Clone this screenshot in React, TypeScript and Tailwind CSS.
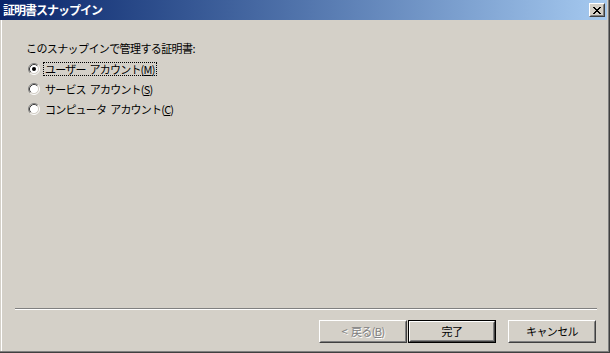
import type { ReactNode } from "react"

const font = "font-['Noto_Sans_CJK_JP','Noto_Sans_CJK_SC',sans-serif]"

function Radio({ checked }: { checked?: boolean }) {
  return (
    <svg width="12" height="12" viewBox="0 0 12 12" className="shrink-0">
      <circle cx="6" cy="6" r="4.5" fill="#ffffff" />
      <path d="M2.11 9.89 A5.5 5.5 0 0 1 9.89 2.11" fill="none" stroke="#808080" />
      <path d="M9.89 2.11 A5.5 5.5 0 0 1 2.11 9.89" fill="none" stroke="#ffffff" />
      <path d="M2.82 9.18 A4.5 4.5 0 0 1 9.18 2.82" fill="none" stroke="#404040" />
      <path d="M9.18 2.82 A4.5 4.5 0 0 1 2.82 9.18" fill="none" stroke="#D4D0C8" />
      {checked && <circle cx="6" cy="6" r="2" fill="#000000" />}
    </svg>
  )
}

function Option({ first, rest, keyChar, checked }: { first: string; rest: string; keyChar: string; checked?: boolean }) {
  return (
    <div className="flex items-center gap-[3px] h-[14px]">
      <Radio checked={checked} />
      <span
        className={`px-px leading-[12px] tracking-[-0.8px] border border-dotted ${
          checked ? "border-black" : "border-transparent"
        }`}
      >
        {first}
        <span className="inline-block w-[4px]" />
        {rest}(<span className="underline">{keyChar}</span>)
      </span>
    </div>
  )
}

function Btn({ children, def, disabled }: { children: ReactNode; def?: boolean; disabled?: boolean }) {
  return (
    <div className={`w-[88px] h-[23px] flex ${def ? "border border-black" : ""}`}>
      <div className="flex-1 flex border border-t-white border-l-white border-r-[#404040] border-b-[#404040]">
        <div
          className={`flex-1 flex items-center justify-center border border-t-[#D4D0C8] border-l-[#D4D0C8] border-r-[#808080] border-b-[#808080] text-[11px] tracking-[-0.6px] ${
            disabled ? "text-[#808080] [text-shadow:1px_1px_0_#ffffff]" : "text-black"
          }`}
        >
          {children}
        </div>
      </div>
    </div>
  )
}

export default function App() {
  return (
    <div className={`w-[610px] h-[353px] bg-[#D4D0C8] border-r border-b border-[#404040] ${font}`}>
      <div className="h-full flex flex-col border-r border-b border-[#808080]">
        {/* title bar */}
        <div className="h-[20px] mr-px shrink-0 flex items-center justify-between pl-[3px] pr-[2px] bg-gradient-to-r from-[#0A246A] to-[#A6CAF0]">
          <span className="text-white font-bold text-[12px] tracking-[-1px]">証明書スナップイン</span>
          <button className="w-[16px] h-[14px] flex border border-t-white border-l-white border-r-[#404040] border-b-[#404040] bg-[#D4D0C8]">
            <span className="flex-1 flex items-center justify-center border border-t-[#D4D0C8] border-l-[#D4D0C8] border-r-[#808080] border-b-[#808080]">
              <svg width="8" height="7" viewBox="0 0 8 7" shapeRendering="crispEdges">
                <path d="M0 0h2v1h-2zM6 0h2v1h-2zM1 1h2v1h-2zM5 1h2v1h-2zM2 2h4v1h-4zM3 3h2v1h-2zM2 4h4v1h-4zM1 5h2v1h-2zM5 5h2v1h-2zM0 6h2v1h-2zM6 6h2v1h-2z" fill="#000" />
              </svg>
            </span>
          </button>
        </div>

        <div className="flex-1 flex flex-col ml-px border-l border-white text-[11px] text-black">
          <div className="pt-[21px] pl-[24px]">
            <div className="leading-[14px] tracking-[-0.6px]">このスナップインで管理する証明書:</div>
            <div className="mt-[7px] ml-[2px] flex flex-col gap-[6px]">
              <Option first="ユーザー" rest="アカウント" keyChar="M" checked />
              <Option first="サービス" rest="アカウント" keyChar="S" />
              <Option first="コンピュータ" rest="アカウント" keyChar="C" />
            </div>
          </div>

          <div className="flex-1" />

          <div className="ml-[13px] mr-[11px] border-t border-t-[#808080] border-b border-b-white" />

          <div className="flex justify-end pt-[10px] pb-[8px] pr-[12px]">
            <Btn disabled>
              &lt;<span className="inline-block w-[4px]" />戻る(<span className="underline">B</span>)
            </Btn>
            <div className="w-[1px]" />
            <Btn def>完了</Btn>
            <div className="w-[12px]" />
            <Btn>キャンセル</Btn>
          </div>
        </div>
      </div>
    </div>
  )
}
